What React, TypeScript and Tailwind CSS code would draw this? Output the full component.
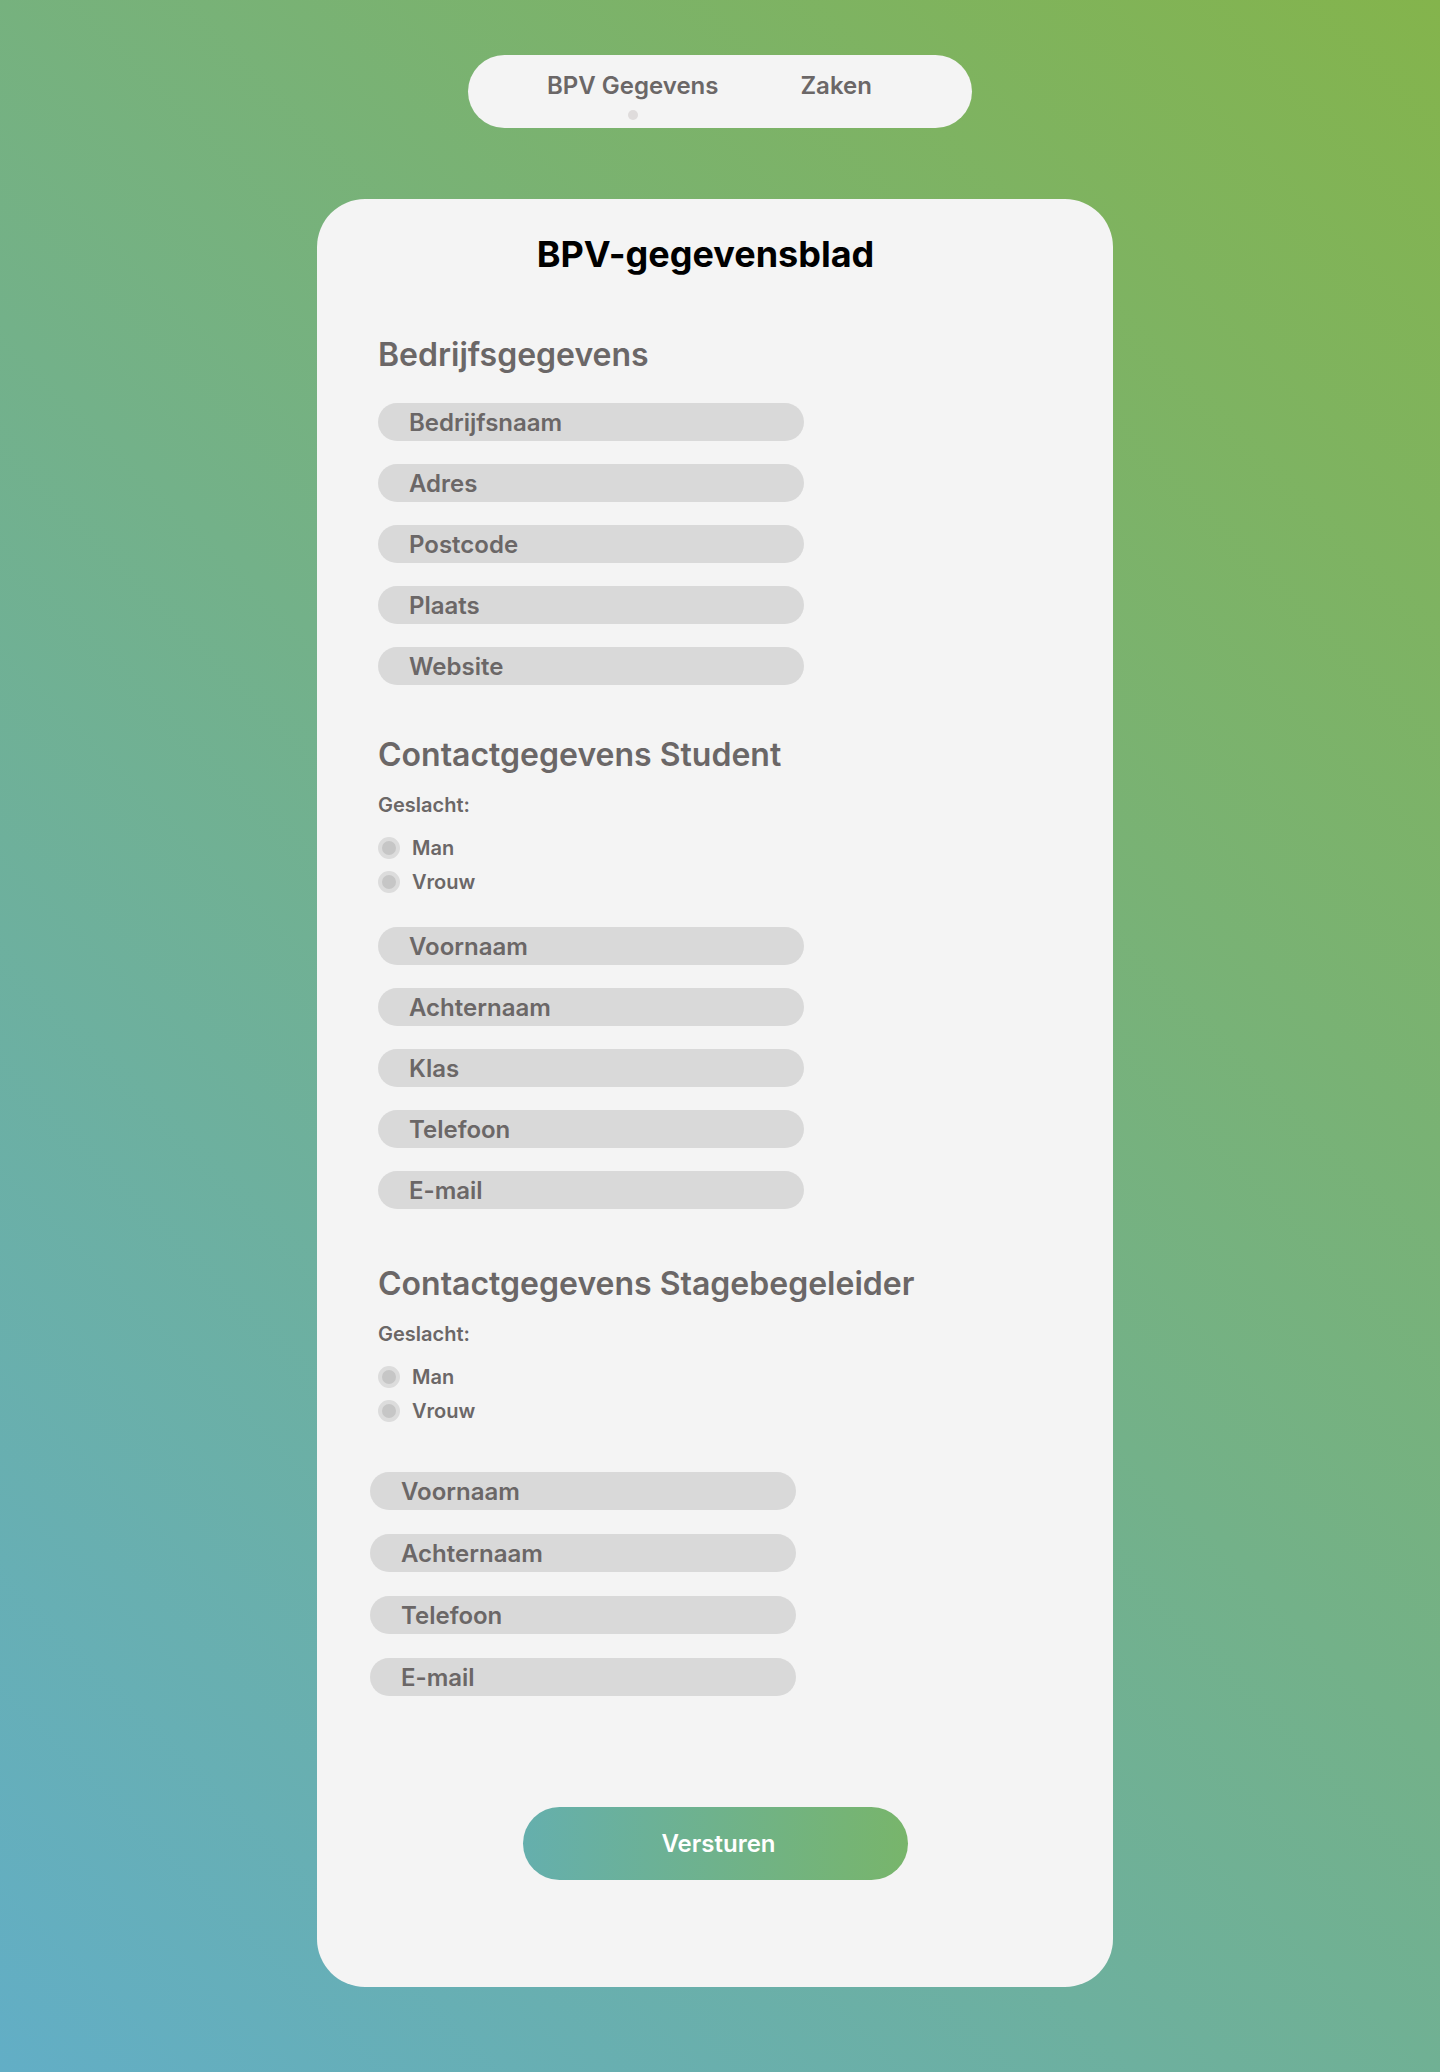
import React from "react";

const font = { fontFamily: "Inter, 'Noto Sans', sans-serif" };

function Field({ label }: { label: string }) {
  return (
    <input
      type="text"
      placeholder={label}
      className="block w-[426px] h-[38px] rounded-full bg-[#d9d9d9] pl-[31px] text-[24px] font-semibold text-[#6b6767] placeholder:text-[#6b6767] outline-none"
    />
  );
}

function Gender({ name }: { name: string }) {
  return (
    <div>
      <div className="text-[20px] leading-[19px] font-semibold text-[#6b6767]">Geslacht:</div>
      <div className="mt-[22px] flex flex-col gap-[12px]">
        {["Man", "Vrouw"].map((option) => (
          <label key={option} className="flex items-center gap-[12px] h-[22px]">
            <input
              type="radio"
              name={name}
              className="appearance-none w-[22px] h-[22px] rounded-full bg-[#c6c6c6] border-[4px] border-[#dcdcdc]"
            />
            <span className="text-[20px] leading-none font-semibold text-[#6b6767]">{option}</span>
          </label>
        ))}
      </div>
    </div>
  );
}

function SectionTitle({ children }: { children: React.ReactNode }) {
  return <h2 className="text-[32px] leading-[30px] font-semibold text-[#6b6767]">{children}</h2>;
}

export default function App() {
  return (
    <div
      style={font}
      className="min-h-[2072px] w-full bg-[linear-gradient(45deg,#62aec6,#84b44c)] pt-[55px]"
    >
      {/* Nav */}
      <div className="flex justify-center">
        <nav className="w-[504px] h-[73px] rounded-full bg-[#f4f4f4] pl-[79px] pt-[19px] flex items-start gap-[82px]">
          <div className="flex flex-col items-center">
            <span className="text-[24px] leading-[24px] font-semibold text-[#6b6767]">BPV Gegevens</span>
            <span className="mt-[12px] w-[10px] h-[10px] rounded-full bg-[#dfdcdc]" />
          </div>
          <span className="text-[24px] leading-[24px] font-semibold text-[#6b6767]">Zaken</span>
        </nav>
      </div>

      {/* Card */}
      <div className="flex justify-center pr-[10px] mt-[71px]">
        <div className="w-[796px] rounded-[48px] bg-[#f4f4f4] pt-[38px] pb-[107px] pl-[61px]">
          <h1 className="text-[36px] leading-[34px] font-bold text-black text-center pr-[80px]">
            BPV-gegevensblad
          </h1>

          <div className="mt-[69px]">
            <SectionTitle>Bedrijfsgegevens</SectionTitle>
            <div className="mt-[33px] flex flex-col gap-[23px]">
              {["Bedrijfsnaam", "Adres", "Postcode", "Plaats", "Website"].map((l) => (
                <Field key={l} label={l} />
              ))}
            </div>
          </div>

          <div className="mt-[55px]">
            <SectionTitle>Contactgegevens Student</SectionTitle>
            <div className="mt-[26px]">
              <Gender name="student" />
            </div>
            <div className="mt-[34px] flex flex-col gap-[23px]">
              {["Voornaam", "Achternaam", "Klas", "Telefoon", "E-mail"].map((l) => (
                <Field key={l} label={l} />
              ))}
            </div>
          </div>

          <div className="mt-[60px]">
            <SectionTitle>Contactgegevens Stagebegeleider</SectionTitle>
            <div className="mt-[26px]">
              <Gender name="begeleider" />
            </div>
            <div className="mt-[50px] -ml-[8px] flex flex-col gap-[24px]">
              {["Voornaam", "Achternaam", "Telefoon", "E-mail"].map((l) => (
                <Field key={l} label={l} />
              ))}
            </div>
          </div>

          <div className="mt-[111px] pr-[61px] flex justify-center">
            <button className="w-[385px] h-[73px] rounded-full bg-[linear-gradient(90deg,#65afad,#78b56b)] pl-[7px] text-white text-[24px] font-semibold">
              Versturen
            </button>
          </div>
        </div>
      </div>
    </div>
  );
}
